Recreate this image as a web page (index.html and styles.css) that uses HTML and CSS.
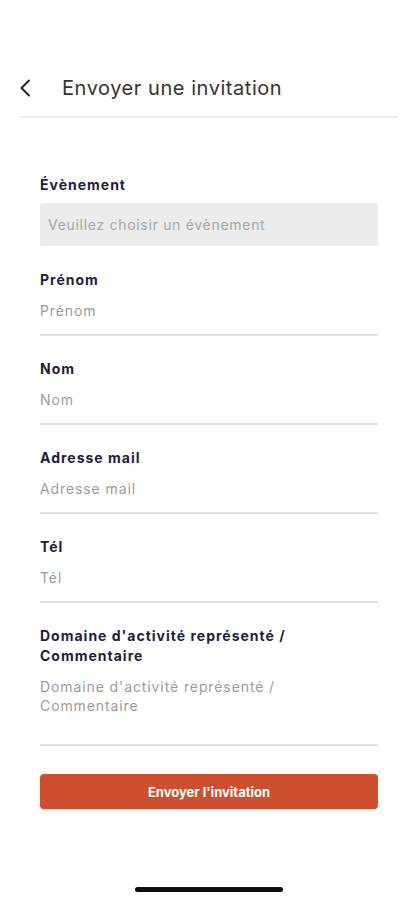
FILE: index.html
```html
<!DOCTYPE html>
<html lang="fr">
<head>
<meta charset="utf-8">
<title>Envoyer une invitation</title>
<link rel="stylesheet" href="styles.css">
</head>
<body>
<div class="screen">
  <header class="topbar">
    <button class="back" aria-label="Retour">
      <svg width="12" height="18" viewBox="0 0 12 18"><path d="M10 1.5 L2.5 9 L10 16.5" fill="none" stroke="#222" stroke-width="2" stroke-linecap="round" stroke-linejoin="round"/></svg>
    </button>
    <h1 class="title">Envoyer une invitation</h1>
  </header>
  <div class="divider"></div>

  <form class="form">
    <div class="field field-select">
      <label class="label">Évènement</label>
      <div class="select">Veuillez choisir un évènement</div>
    </div>
    <div class="field">
      <label class="label">Prénom</label>
      <input class="input" placeholder="Prénom">
    </div>
    <div class="field">
      <label class="label">Nom</label>
      <input class="input" placeholder="Nom">
    </div>
    <div class="field">
      <label class="label">Adresse mail</label>
      <input class="input" placeholder="Adresse mail">
    </div>
    <div class="field">
      <label class="label">Tél</label>
      <input class="input" placeholder="Tél">
    </div>
    <div class="field">
      <label class="label">Domaine d'activité représenté / Commentaire</label>
      <textarea class="input textarea" placeholder="Domaine d'activité représenté / Commentaire"></textarea>
    </div>
    <button type="button" class="submit">Envoyer l'invitation</button>
  </form>
  <div class="home-indicator"></div>
</div>
</body>
</html>
```

FILE: styles.css
```css
* { box-sizing: border-box; }
html, body { margin: 0; padding: 0; background: #fff; }
body { font-family: Inter, "Noto Sans", "Liberation Sans", sans-serif; }
.screen { position: relative; width: 417px; height: 900px; overflow: hidden; }

.topbar {
  display: flex;
  align-items: center;
  height: 40px;
  margin-top: 68px;
  padding-left: 19px;
}
.back {
  border: 0; background: none; padding: 0;
  width: 14px; height: 18px;
  display: flex; align-items: center;
}
.title {
  margin: 0 0 0 29px;
  font-size: 20px;
  font-weight: 400;
  color: #333;
  letter-spacing: 0.55px;
}
.divider {
  height: 2px;
  background: #eeeeee;
  margin: 8px 19px 0 20px;
}

.form {
  display: flex;
  flex-direction: column;
  padding: 57px 39px 0 40px;
}
.field {
  display: flex;
  flex-direction: column;
  margin-bottom: 23px;
}
.field-select { margin-bottom: 24px; }
.label {
  font-size: 14px;
  line-height: 20px;
  font-weight: 700;
  color: #1d1d3f;
  letter-spacing: 1px;
}
.select {
  margin-top: 8px;
  height: 43px;
  background: #ececec;
  border-radius: 2px;
  padding: 0 8px;
  display: flex; align-items: center;
  font-size: 14px;
  letter-spacing: 0.7px;
  color: #a6a6a6;
}
.input {
  margin-top: 10px;
  border: 0;
  border-bottom: 2px solid #e0e0e0;
  padding: 0 0 14px 0;
  font-family: inherit;
  font-size: 14px;
  line-height: 20px;
  letter-spacing: 0.9px;
  height: 36px;
  color: #333;
  outline: none;
  background: transparent;
}
.input::placeholder { color: #9b9b9b; }
.textarea {
  resize: none;
  height: 69px;
  line-height: 19px;
  margin-top: 11px;
  overflow: hidden;
}
.submit {
  margin-top: 5px;
  height: 35px;
  border: 0;
  border-radius: 4px;
  background: #cd4f30;
  color: #fff;
  font-family: inherit;
  font-size: 13px;
  font-weight: 700;
  box-shadow: 0 1px 2px rgba(0,0,0,0.15);
}
.home-indicator {
  position: absolute;
  left: 135px;
  bottom: 8px;
  width: 148px;
  height: 5px;
  border-radius: 3px;
  background: #111;
}
```
